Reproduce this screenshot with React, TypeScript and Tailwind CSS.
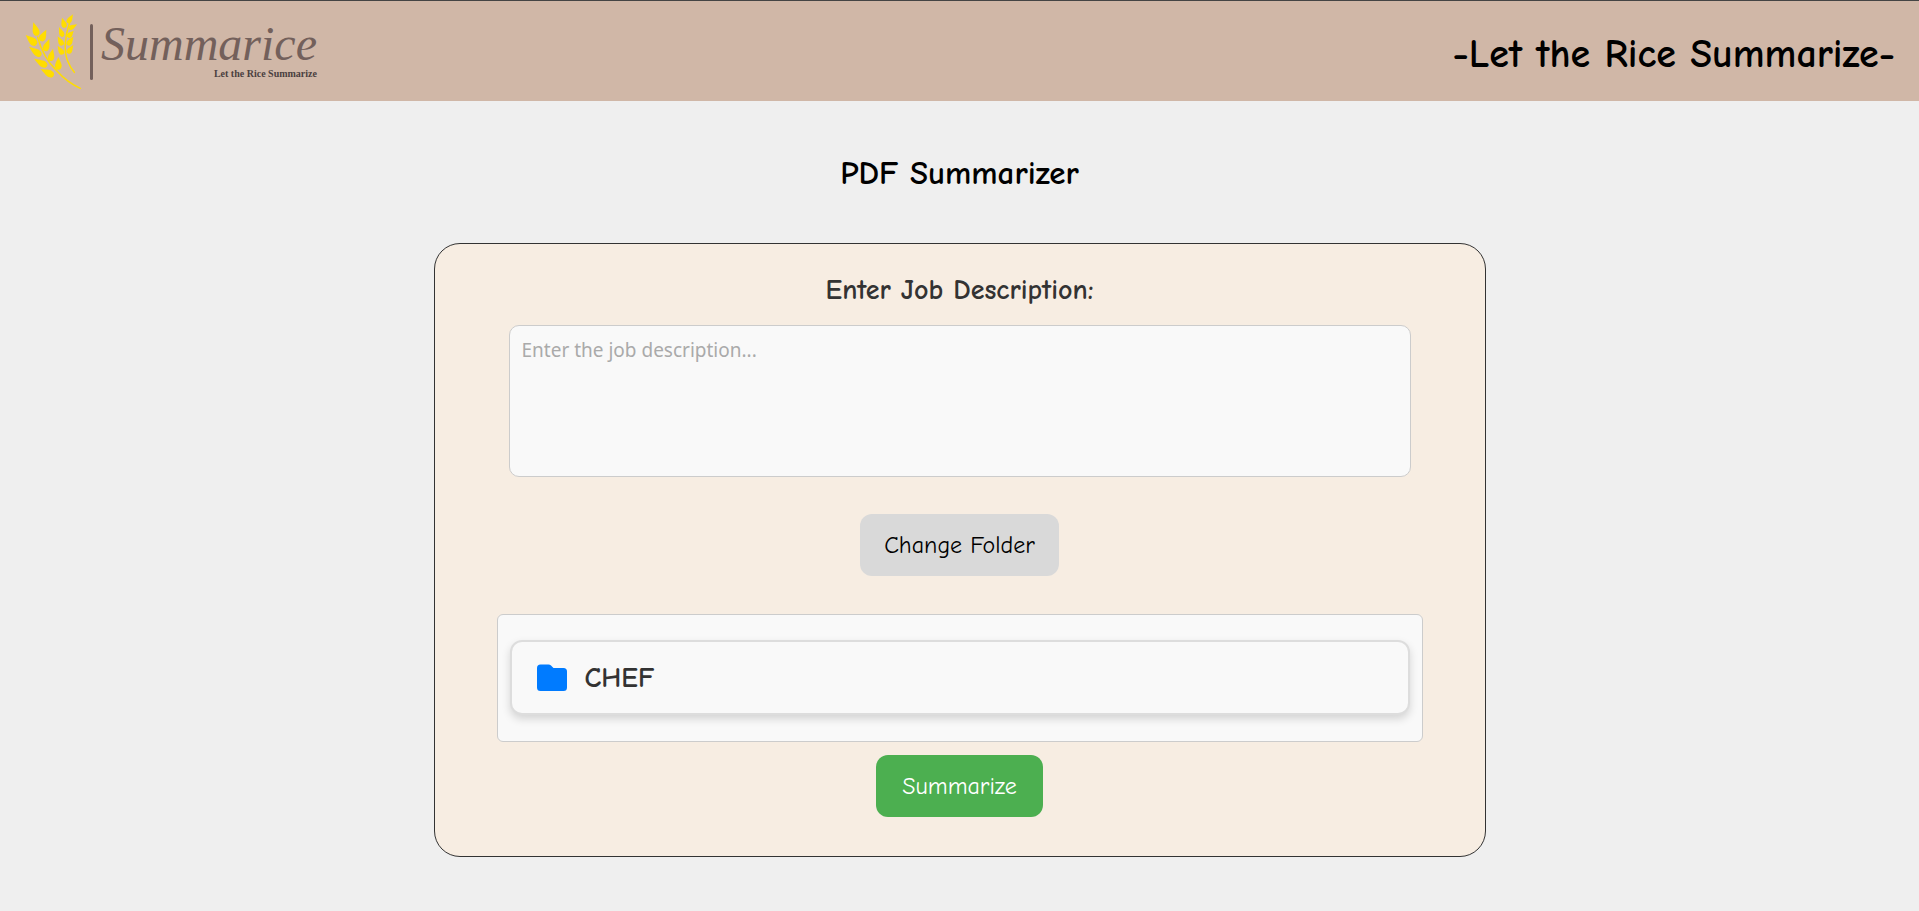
import { useState } from "react";

type Grain = [number, number, number, number, number];

// Each grain runs from its pointed tip to its rounded base: x1, y1, x2, y2, width.
const grains: Grain[] = [
  [70, 52, 82, 92, 20],
  [47, 90, 79, 119, 22],
  [57, 125, 93, 152, 20],
  [72, 161, 111, 184, 20],
  [92, 192, 131, 212, 21],
  [109, 74, 92, 108, 20],
  [118, 102, 104, 138, 19],
  [129, 131, 121, 168, 19],
  [145, 156, 145, 194, 20],
  [189, 28, 173, 54, 15],
  [156, 38, 165, 68, 16],
  [147, 66, 159, 95, 15],
  [143, 94, 158, 121, 16],
  [143, 122, 159, 148, 16],
  [201, 58, 177, 72, 14],
  [191, 77, 173, 97, 16],
  [190, 95, 173, 121, 16],
  [190, 120, 173, 145, 16],
];

function grainPath([x1, y1, x2, y2, w]: Grain) {
  const dx = x2 - x1;
  const dy = y2 - y1;
  const len = Math.hypot(dx, dy);
  const nx = (-dy / len) * w;
  const ny = (dx / len) * w;
  const at = (t: number, s: number) => `${(x1 + dx * t + nx * s).toFixed(1)} ${(y1 + dy * t + ny * s).toFixed(1)}`;
  return `M${at(0, 0)}C${at(0.25, 0.2)} ${at(0.45, 0.42)} ${at(0.65, 0.5)}C${at(0.95, 0.5)} ${at(1, 0.25)} ${at(1, 0)}C${at(1, -0.25)} ${at(0.95, -0.5)} ${at(0.65, -0.5)}C${at(0.45, -0.42)} ${at(0.25, -0.2)} ${at(0, 0)}Z`;
}

function Wheat() {
  return (
    <svg viewBox="42 24 174 231" className="h-[77px] w-[58px]" aria-hidden="true">
      <g fill="#ffdd00">
        {grains.map((g) => (
          <path key={g.join()} d={grainPath(g)} />
        ))}
      </g>
      <g fill="none" stroke="#ffdd00" strokeWidth="4.5" strokeLinecap="round">
        <path d="M83 97C95 142 118 176 140 197Q172 232 211 250" />
        <path d="M178 56C166 90 160 135 173 168Q182 190 193 202" />
      </g>
    </svg>
  );
}

function Logo() {
  return (
    <a href="#" aria-label="Summarice" className="flex items-center gap-2">
      <Wheat />
      <span className="h-14 w-[3px] rounded-full bg-[#73605b]" />
      <span className="flex flex-col items-end pb-1">
        <span className="font-['Liberation_Serif',serif] text-5xl leading-12 text-[#73605b] italic">Summarice</span>
        <span className="font-['Liberation_Serif',serif] text-[10px] leading-3 font-bold text-[#4a4040]">
          Let the Rice Summarize
        </span>
      </span>
    </a>
  );
}

function FolderIcon() {
  return (
    <svg viewBox="0 0 30 27" className="h-[27px] w-[30px]" fill="#007bff" aria-hidden="true">
      <path d="M3.5 0.5H11.5Q13 0.5 14 1.5L16.5 4H26.5Q30 4 30 7.5V23.5Q30 27 26.5 27H3.5Q0 27 0 23.5V4Q0 0.5 3.5 0.5Z" />
    </svg>
  );
}

export default function App() {
  const [description, setDescription] = useState("");

  return (
    <div className="min-h-screen bg-[#efefef] font-['Comic_Sans_MS','Comic_Neue','Open_Sans',sans-serif] text-black">
      <header className="flex items-center justify-between border-t border-[#444] bg-[#d0b7a7] pt-3 pr-6 pb-[11px] pl-6">
        <Logo />
        <p className="pt-1 text-[40px] leading-12 font-bold">-Let the Rice Summarize-</p>
      </header>

      <main className="flex flex-col items-center px-6 pt-12 pb-12">
        <h1 className="text-[33px] leading-12 font-bold">PDF Summarizer</h1>

        <section className="mt-[46px] flex w-full max-w-[1052px] flex-col items-center rounded-[26px] border border-[#333] bg-[#f7ede2] px-15 pt-7 pb-[39px]">
          <label htmlFor="description" className="text-[28px] leading-9 font-semibold text-[#333]">
            Enter Job Description:
          </label>
          <div className="mt-[17px] flex w-full px-[14px]">
            <textarea
              id="description"
              value={description}
              onChange={(e) => setDescription(e.target.value)}
              placeholder="Enter the job description..."
              className="h-[152px] w-full resize-none rounded-[10px] border border-[#ccc] bg-[#f9f9f9] px-3 py-3 font-['Tahoma','Noto_Sans',sans-serif] text-[19px] leading-6 text-[#333] placeholder:text-[#aaa]"
            />
          </div>

          <button type="button" className="mt-[37px] h-[62px] rounded-xl bg-[#d9d9d9] px-6 text-2xl">
            Change Folder
          </button>

          <div className="mt-[38px] w-full px-[2px]">
            <ul className="rounded-md border border-[#ccc] bg-[#f9f9f9] px-3 pt-[25px] pb-[26px]">
              <li className="flex h-[75px] items-center gap-[18px] rounded-xl border-2 border-[#ddd] bg-[#f9f9f9] px-[25px] shadow-[0_4px_8px_rgba(0,0,0,0.15)]">
                <FolderIcon />
                <span className="text-[28px] leading-9 font-semibold text-[#333]">CHEF</span>
              </li>
            </ul>
          </div>

          <button type="button" className="mt-[13px] h-[62px] rounded-xl bg-[#4caf50] px-[26px] text-2xl text-white">
            Summarize
          </button>
        </section>
      </main>
    </div>
  );
}
